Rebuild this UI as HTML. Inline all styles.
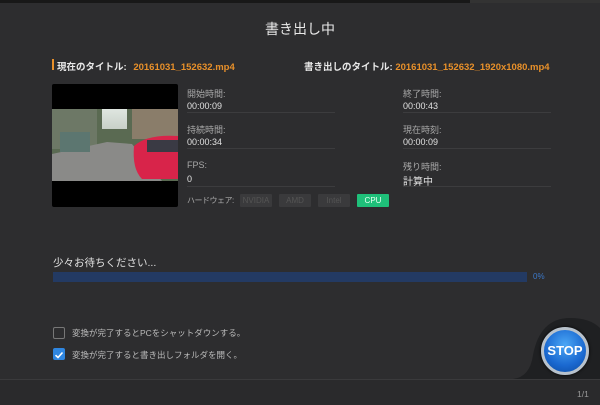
<!DOCTYPE html><html><head><meta charset="utf-8"><style>
*{margin:0;padding:0;box-sizing:border-box}
body{width:600px;height:405px;background:#2d2d2f;position:relative;overflow:hidden;font-family:"Liberation Sans","Noto Sans CJK JP",sans-serif;color:#d8d8d8}
.a{position:absolute;white-space:nowrap}
.lbl{font-size:9px;color:#a8a8a8}
.val{font-size:9px;color:#e0e0e0}
.ln{position:absolute;height:1px;background:#3c3c3e}
.hw{position:absolute;top:194px;height:13px;background:#3a3a3c;color:#555;font-size:8px;text-align:center;line-height:13px;border-radius:1px}
</style></head><body>
<div class="a" style="left:0;top:0;width:600px;height:3px;background:#181818"></div>
<div class="a" style="left:470px;top:0;width:130px;height:3px;background:#333"></div>
<div class="a" style="left:0;top:19px;width:600px;text-align:center;font-size:14px;color:#e8e8e8">書き出し中</div>
<div class="a" style="left:52px;top:59px;width:2px;height:11px;background:#e8902a"></div>
<div class="a" style="left:57px;top:59px;font-size:9.5px;font-weight:bold;color:#e8e8e8">現在のタイトル: <span style="color:#e8902a;margin-left:4px">20161031_152632.mp4</span></div>
<div class="a" style="left:304px;top:59px;font-size:9.5px;font-weight:bold;color:#e8e8e8">書き出しのタイトル: <span style="color:#e8902a">20161031_152632_1920x1080.mp4</span></div>
<div class="a" style="left:52px;top:84px;width:126px;height:123px;background:#000;border-radius:2px;overflow:hidden">
<svg width="126" height="123" style="position:absolute;left:0;top:0">
<defs><linearGradient id="s" x1="0" y1="0" x2="0" y2="1"><stop offset="0" stop-color="#dfe6e0"/><stop offset="1" stop-color="#c8d0c8"/></linearGradient></defs>
<rect x="0" y="25" width="126" height="72" fill="#5a6a52"/>
<rect x="50" y="25" width="25" height="20" fill="url(#s)"/>
<rect x="0" y="25" width="45" height="40" fill="#6d7866"/>
<rect x="80" y="25" width="46" height="30" fill="#8a7d6a"/>
<polygon points="0,97 0,70 55,58 80,60 110,97" fill="#8a8a88"/>
<rect x="8" y="48" width="30" height="20" fill="#5c7670"/>
<path d="M82 62 Q95 50 126 52 L126 95 L90 95 Q80 85 82 62Z" fill="#d8244a"/>
<rect x="95" y="56" width="31" height="12" fill="#3a3a44"/>
</svg></div>
<div class="a lbl" style="left:187px;top:87px">開始時間:</div><div class="a val" style="left:187px;top:101px">00:00:09</div>
<div class="ln" style="left:187px;top:112px;width:148px"></div>
<div class="a lbl" style="left:187px;top:123px">持続時間:</div><div class="a val" style="left:187px;top:137px">00:00:34</div>
<div class="ln" style="left:187px;top:148px;width:148px"></div>
<div class="a lbl" style="left:187px;top:160px">FPS:</div><div class="a val" style="left:187px;top:174px">0</div>
<div class="ln" style="left:187px;top:186px;width:148px"></div>
<div class="a lbl" style="left:403px;top:87px">終了時間:</div><div class="a val" style="left:403px;top:101px">00:00:43</div>
<div class="ln" style="left:403px;top:112px;width:148px"></div>
<div class="a lbl" style="left:403px;top:123px">現在時刻:</div><div class="a val" style="left:403px;top:137px">00:00:09</div>
<div class="ln" style="left:403px;top:148px;width:148px"></div>
<div class="a lbl" style="left:403px;top:160px">残り時間:</div><div class="a val" style="left:403px;top:173px;font-size:10px">計算中</div>
<div class="ln" style="left:403px;top:186px;width:148px"></div>
<div class="a lbl" style="left:187px;top:195px;font-size:8px;letter-spacing:-0.5px">ハードウェア:</div>
<div class="hw" style="left:240px;width:32px">NVIDIA</div>
<div class="hw" style="left:279px;width:32px">AMD</div>
<div class="hw" style="left:318px;width:32px">Intel</div>
<div class="hw" style="left:357px;width:32px;background:#1fc07a;color:#e8fff2">CPU</div>
<div class="a" style="left:53px;top:255px;font-size:10.5px;color:#e0e0e0">少々お待ちください...</div>
<div class="a" style="left:53px;top:272px;width:474px;height:10px;background:#233a63"></div>
<div class="a" style="left:533px;top:272px;font-size:8px;color:#3c78c8">0%</div>
<div class="a" style="left:53px;top:327px;width:12px;height:12px;border:1px solid #777;border-radius:2px"></div>
<div class="a" style="left:72px;top:327px;font-size:8.5px;color:#bbb">変換が完了するとPCをシャットダウンする。</div>
<div class="a" style="left:53px;top:348px;width:12px;height:12px;background:#2f86e0;border-radius:2px"><svg width="12" height="12"><path d="M2.5 6.2 L5 8.5 L9.5 3.5" stroke="#fff" stroke-width="1.6" fill="none"/></svg></div>
<div class="a" style="left:72px;top:349px;font-size:8.5px;color:#bbb">変換が完了すると書き出しフォルダを開く。</div>
<div class="a" style="left:0;top:379px;width:600px;height:26px;background:#2a2a2c;border-top:1px solid #3a3a3c"></div>
<svg class="a" style="left:505px;top:310px" width="95" height="69"><path d="M8 69 Q25 67 28 45 Q35 8 65 8 Q85 8 95 18 L95 69Z" fill="#1f2022"/></svg>
<div class="a" style="left:541px;top:327px;width:48px;height:48px;border-radius:50%;background:radial-gradient(circle at 50% 35%,#4aa6f5,#1a68d0 60%,#0c4a9e);border:3px solid #b8c2cc;box-shadow:0 0 3px #000"></div>
<div class="a" style="left:541px;top:343px;width:48px;text-align:center;font-size:13px;font-weight:bold;color:#fff">STOP</div>
<div class="a" style="left:577px;top:389px;font-size:8.5px;color:#999">1/1</div>
</body></html>
